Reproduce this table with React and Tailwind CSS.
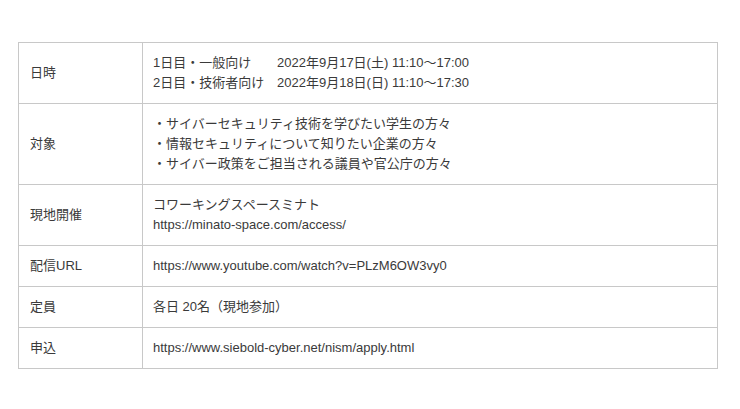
export default function App() {
  const rows = [
    {
      label: '日時',
      lines: [
        <span key="a"><span className="inline-block w-[124px]">1日目・一般向け</span>2022年9月17日(土) 11:10〜17:00</span>,
        <span key="b"><span className="inline-block w-[124px]">2日目・技術者向け</span>2022年9月18日(日) 11:10〜17:30</span>,
      ],
    },
    {
      label: '対象',
      lines: [
        '・サイバーセキュリティ技術を学びたい学生の方々',
        '・情報セキュリティについて知りたい企業の方々',
        '・サイバー政策をご担当される議員や官公庁の方々',
      ],
    },
    {
      label: '現地開催',
      lines: ['コワーキングスペースミナト', 'https://minato-space.com/access/'],
    },
    { label: '配信URL', lines: ['https://www.youtube.com/watch?v=PLzM6OW3vy0'] },
    { label: '定員', lines: ['各日 20名（現地参加）'] },
    { label: '申込', lines: ['https://www.siebold-cyber.net/nism/apply.html'] },
  ];

  return (
    <div className="min-h-screen bg-white pt-[42px] pl-[18px] font-['Liberation_Sans','Noto_Sans_CJK_JP',sans-serif] text-[13px] leading-[20px] text-[#3a3a3a]">
      <div className="w-[700px] border border-[#c8c8c8]">
        {rows.map((row, i) => (
          <div key={i} className={`flex ${i > 0 ? 'border-t border-[#c8c8c8]' : ''}`}>
            <div className="w-[124px] shrink-0 flex items-center pl-[11px] border-r border-[#c8c8c8]">
              {row.label}
            </div>
            <div className="py-[10px] pl-[10px]">
              {row.lines.map((line, j) => (
                <div key={j}>{line}</div>
              ))}
            </div>
          </div>
        ))}
      </div>
    </div>
  );
}
